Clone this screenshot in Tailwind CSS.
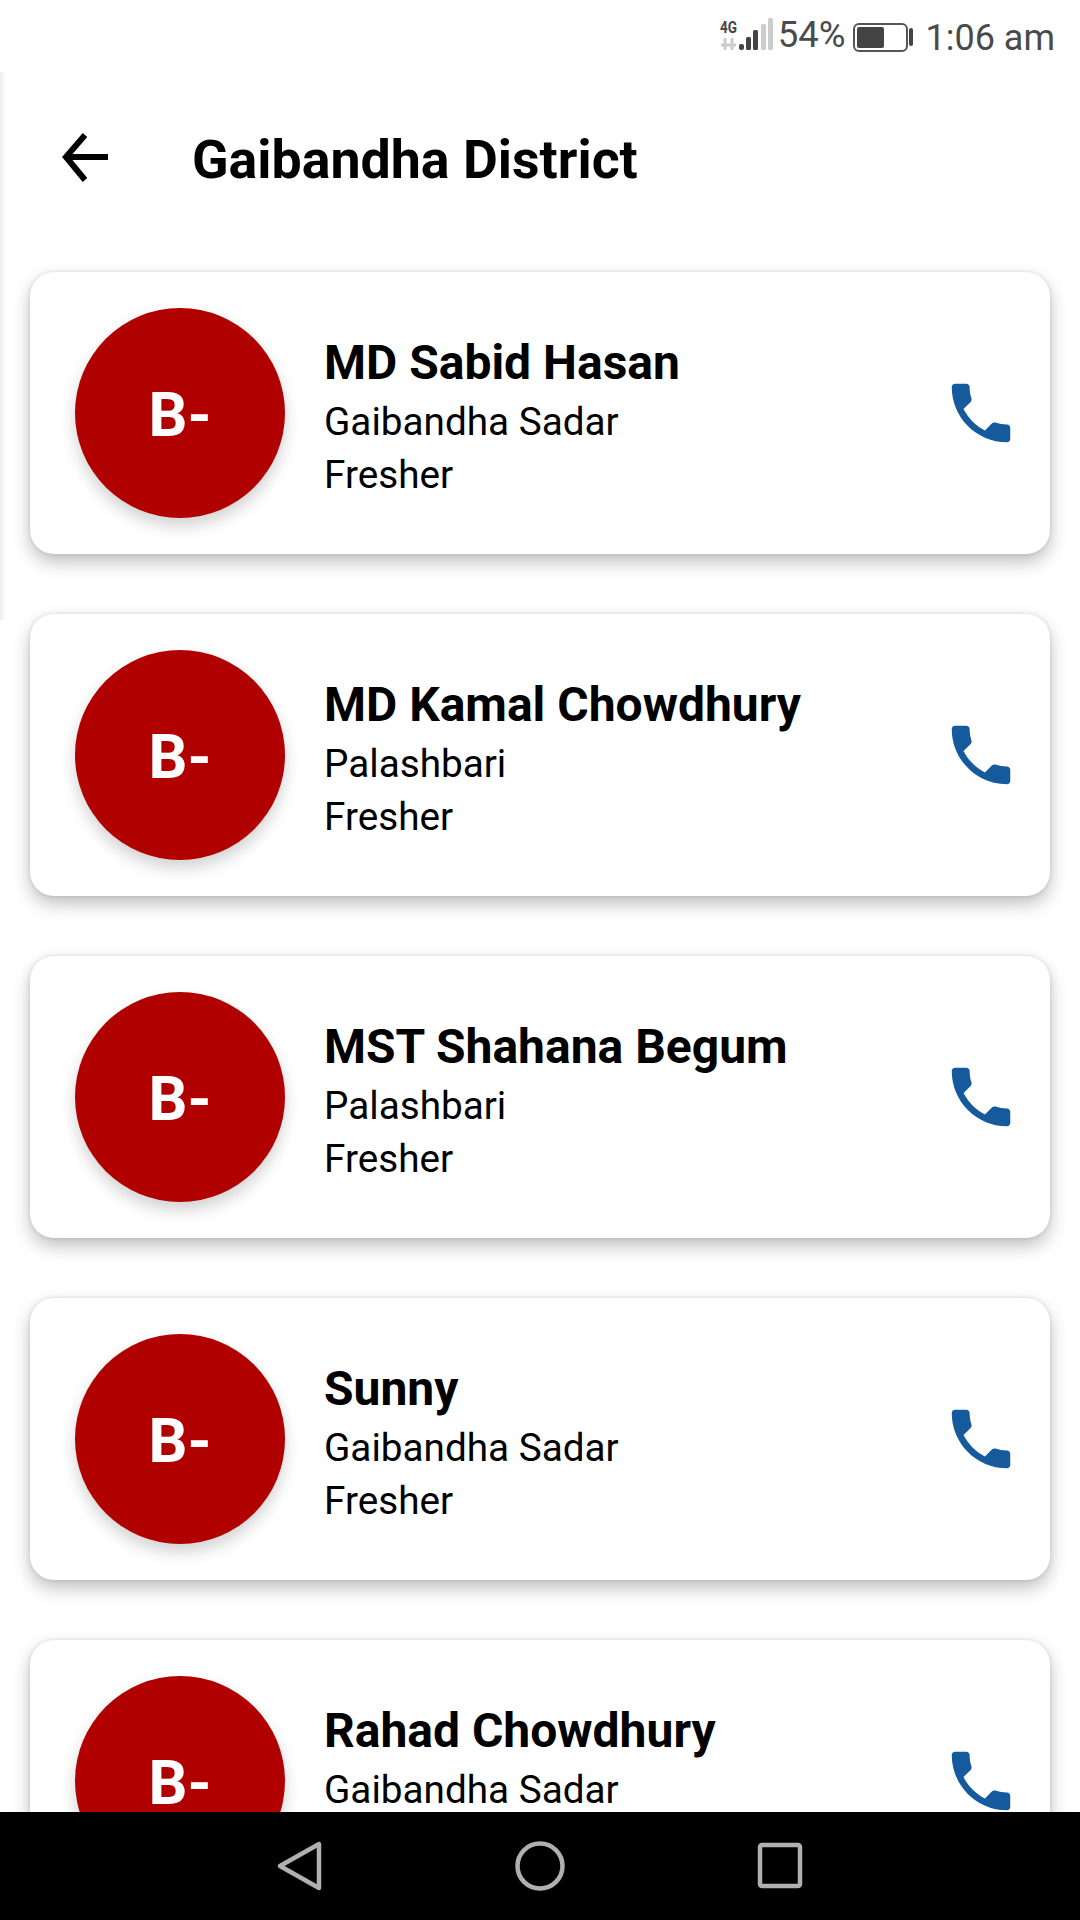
<!DOCTYPE html>
<html>
<head>
<meta charset="utf-8">
<script src="https://cdn.jsdelivr.net/npm/@tailwindcss/browser@4"></script>
</head>
<body class="font-[Roboto,sans-serif] bg-white">
<div class="relative w-[1080px] h-[1920px] flex flex-col overflow-hidden bg-white">
  <!-- status bar -->
  <div class="h-[72px] shrink-0 flex items-center justify-end pr-[25px] pt-[3px] text-[#4a4a4a]">
    <svg class="w-[56px] h-[40px] mr-[3px]" viewBox="0 0 56 40">
      <text x="1" y="15" font-family="Roboto" font-weight="700" font-size="17" fill="#444" textLength="17" lengthAdjust="spacingAndGlyphs">4G</text>
      <path d="M2 27h15M6 20v12M13 20v12" stroke="#ccc" stroke-width="3" fill="none"/>
      <rect x="20" y="26" width="5" height="6" rx="2" fill="#444"/>
      <rect x="27" y="19" width="5" height="13" rx="1.500" fill="#444"/>
      <rect x="34" y="12" width="5" height="20" rx="1.500" fill="#444"/>
      <rect x="42" y="6" width="5" height="26" rx="1.500" fill="#ccc"/>
      <rect x="49" y="0" width="5" height="32" rx="1.500" fill="#ccc"/>
    </svg>
    <span class="text-[36.5px] leading-none mr-[7px] -mt-[4px]">54%</span>
    <svg class="w-[60px] h-[30px] mr-[13px]" viewBox="0 0 60 30">
      <rect x="1" y="1" width="53" height="27" rx="5" fill="none" stroke="#555" stroke-width="2"/>
      <rect x="4" y="4" width="27" height="21" rx="2" fill="#444"/>
      <rect x="56" y="5" width="4" height="18" rx="2" fill="#444"/>
    </svg>
    <span class="text-[36px] leading-none">1:06 am</span>
  </div>
  <div class="absolute left-0 top-[72px] w-[6px] h-[548px] bg-gradient-to-r from-[#ececec] to-white"></div>

  <!-- content -->
  <div class="flex-1 min-h-0 overflow-hidden">
    <div class="h-[200px] flex items-start pt-[61px] pl-[60px]">
      <svg class="w-[49px] h-[49px]" viewBox="0 0 49 49" fill="none" stroke="#000" stroke-width="6" stroke-linecap="butt" stroke-linejoin="miter">
        <path d="M48 24H6M25 2 6 24l19 23"/>
      </svg>
      <h1 class="ml-[83px] -mt-[3px] text-[53.700px] leading-[60px] font-bold text-black whitespace-nowrap">Gaibandha District</h1>
    </div>

    <div class="flex flex-col gap-[60px] px-[30px]">
      <div class="h-[282px] shrink-0 flex items-center rounded-[24px] bg-white shadow-[0_8px_18px_rgba(0,0,0,.25),0_0_4px_rgba(0,0,0,.12)] pl-[45px] pr-[30px]">
        <div class="w-[210px] h-[210px] shrink-0 rounded-full bg-[#b00000] flex items-center justify-center pt-[5px] text-white font-bold text-[61px] shadow-[0_8px_16px_rgba(0,0,0,.18)]">B-</div>
        <div class="flex-1 ml-[39px] pt-[5px] text-black whitespace-nowrap">
          <div class="text-[48px] leading-[64px] font-bold">MD Sabid Hasan</div>
          <div class="text-[38.700px] leading-[53px]">Gaibandha Sadar</div>
          <div class="text-[38.700px] leading-[53px]">Fresher</div>
        </div>
        <svg class="w-[78px] h-[78px] shrink-0" viewBox="0 0 24 24" fill="#155a9c"><path d="M6.62 10.79c1.44 2.83 3.76 5.14 6.59 6.59l2.2-2.2c.27-.27.67-.36 1.02-.24 1.12.37 2.33.57 3.57.57.55 0 1 .45 1 1V20c0 .55-.45 1-1 1-9.39 0-17-7.61-17-17 0-.55.45-1 1-1h3.5c.55 0 1 .45 1 1 0 1.25.2 2.45.57 3.57.11.35.03.74-.25 1.02l-2.2 2.2z"/></svg>
      </div>

      <div class="h-[282px] shrink-0 flex items-center rounded-[24px] bg-white shadow-[0_8px_18px_rgba(0,0,0,.25),0_0_4px_rgba(0,0,0,.12)] pl-[45px] pr-[30px]">
        <div class="w-[210px] h-[210px] shrink-0 rounded-full bg-[#b00000] flex items-center justify-center pt-[5px] text-white font-bold text-[61px] shadow-[0_8px_16px_rgba(0,0,0,.18)]">B-</div>
        <div class="flex-1 ml-[39px] pt-[5px] text-black whitespace-nowrap">
          <div class="text-[48px] leading-[64px] font-bold">MD Kamal Chowdhury</div>
          <div class="text-[38.700px] leading-[53px]">Palashbari</div>
          <div class="text-[38.700px] leading-[53px]">Fresher</div>
        </div>
        <svg class="w-[78px] h-[78px] shrink-0" viewBox="0 0 24 24" fill="#155a9c"><path d="M6.62 10.79c1.44 2.83 3.76 5.14 6.59 6.59l2.2-2.2c.27-.27.67-.36 1.02-.24 1.12.37 2.33.57 3.57.57.55 0 1 .45 1 1V20c0 .55-.45 1-1 1-9.39 0-17-7.61-17-17 0-.55.45-1 1-1h3.5c.55 0 1 .45 1 1 0 1.25.2 2.45.57 3.57.11.35.03.74-.25 1.02l-2.2 2.2z"/></svg>
      </div>

      <div class="h-[282px] shrink-0 flex items-center rounded-[24px] bg-white shadow-[0_8px_18px_rgba(0,0,0,.25),0_0_4px_rgba(0,0,0,.12)] pl-[45px] pr-[30px]">
        <div class="w-[210px] h-[210px] shrink-0 rounded-full bg-[#b00000] flex items-center justify-center pt-[5px] text-white font-bold text-[61px] shadow-[0_8px_16px_rgba(0,0,0,.18)]">B-</div>
        <div class="flex-1 ml-[39px] pt-[5px] text-black whitespace-nowrap">
          <div class="text-[48px] leading-[64px] font-bold">MST Shahana Begum</div>
          <div class="text-[38.700px] leading-[53px]">Palashbari</div>
          <div class="text-[38.700px] leading-[53px]">Fresher</div>
        </div>
        <svg class="w-[78px] h-[78px] shrink-0" viewBox="0 0 24 24" fill="#155a9c"><path d="M6.62 10.79c1.44 2.83 3.76 5.14 6.59 6.59l2.2-2.2c.27-.27.67-.36 1.02-.24 1.12.37 2.33.57 3.57.57.55 0 1 .45 1 1V20c0 .55-.45 1-1 1-9.39 0-17-7.61-17-17 0-.55.45-1 1-1h3.5c.55 0 1 .45 1 1 0 1.25.2 2.45.57 3.57.11.35.03.74-.25 1.02l-2.2 2.2z"/></svg>
      </div>

      <div class="h-[282px] shrink-0 flex items-center rounded-[24px] bg-white shadow-[0_8px_18px_rgba(0,0,0,.25),0_0_4px_rgba(0,0,0,.12)] pl-[45px] pr-[30px]">
        <div class="w-[210px] h-[210px] shrink-0 rounded-full bg-[#b00000] flex items-center justify-center pt-[5px] text-white font-bold text-[61px] shadow-[0_8px_16px_rgba(0,0,0,.18)]">B-</div>
        <div class="flex-1 ml-[39px] pt-[5px] text-black whitespace-nowrap">
          <div class="text-[48px] leading-[64px] font-bold">Sunny</div>
          <div class="text-[38.700px] leading-[53px]">Gaibandha Sadar</div>
          <div class="text-[38.700px] leading-[53px]">Fresher</div>
        </div>
        <svg class="w-[78px] h-[78px] shrink-0" viewBox="0 0 24 24" fill="#155a9c"><path d="M6.62 10.79c1.44 2.83 3.76 5.14 6.59 6.59l2.2-2.2c.27-.27.67-.36 1.02-.24 1.12.37 2.33.57 3.57.57.55 0 1 .45 1 1V20c0 .55-.45 1-1 1-9.39 0-17-7.61-17-17 0-.55.45-1 1-1h3.5c.55 0 1 .45 1 1 0 1.25.2 2.45.57 3.57.11.35.03.74-.25 1.02l-2.2 2.2z"/></svg>
      </div>

      <div class="h-[282px] shrink-0 flex items-center rounded-[24px] bg-white shadow-[0_8px_18px_rgba(0,0,0,.25),0_0_4px_rgba(0,0,0,.12)] pl-[45px] pr-[30px]">
        <div class="w-[210px] h-[210px] shrink-0 rounded-full bg-[#b00000] flex items-center justify-center pt-[5px] text-white font-bold text-[61px] shadow-[0_8px_16px_rgba(0,0,0,.18)]">B-</div>
        <div class="flex-1 ml-[39px] pt-[5px] text-black whitespace-nowrap">
          <div class="text-[48px] leading-[64px] font-bold">Rahad Chowdhury</div>
          <div class="text-[38.700px] leading-[53px]">Gaibandha Sadar</div>
          <div class="text-[38.700px] leading-[53px]">Fresher</div>
        </div>
        <svg class="w-[78px] h-[78px] shrink-0" viewBox="0 0 24 24" fill="#155a9c"><path d="M6.62 10.79c1.44 2.83 3.76 5.14 6.59 6.59l2.2-2.2c.27-.27.67-.36 1.02-.24 1.12.37 2.33.57 3.57.57.55 0 1 .45 1 1V20c0 .55-.45 1-1 1-9.39 0-17-7.61-17-17 0-.55.45-1 1-1h3.5c.55 0 1 .45 1 1 0 1.25.2 2.45.57 3.57.11.35.03.74-.25 1.02l-2.2 2.2z"/></svg>
      </div>
    </div>
  </div>

  <!-- nav bar -->
  <div class="h-[108px] shrink-0 bg-black relative">
    <svg class="w-[1080px] h-[108px]" viewBox="0 0 1080 108" fill="none" stroke="#b0b0b0" stroke-width="4.500" stroke-linejoin="round">
      <path d="M319 32v44L280 54z"/>
      <circle cx="540" cy="54" r="22.500"/>
      <rect x="760" y="33" width="40" height="41" rx="2"/>
    </svg>
  </div>
</div>
</body>
</html>
